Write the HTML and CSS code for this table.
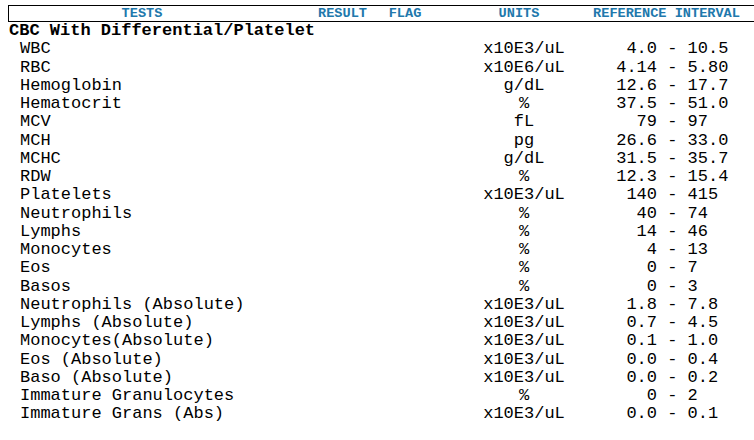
FILE: index.html
```html
<!DOCTYPE html>
<html lang="en">
<head>
<meta charset="utf-8">
<title>CBC With Differential/Platelet</title>
<link rel="stylesheet" href="styles.css">
</head>
<body>
<div class="report">
  <div class="head">
    <div class="h-tests">TESTS</div>
    <div class="h-result">RESULT</div>
    <div class="h-flag">FLAG</div>
    <div class="h-units">UNITS</div>
    <div class="h-ref">REFERENCE INTERVAL</div>
  </div>
  <div class="panel">CBC With Differential/Platelet</div>
  <div class="rows">
    <div class="row"><span class="name">WBC</span><span class="res"></span><span class="flag"></span><span class="units">x10E3/uL</span><span class="ref"><span class="lo">4.0</span><span class="sep">-</span><span class="hi">10.5</span></span></div>
    <div class="row"><span class="name">RBC</span><span class="res"></span><span class="flag"></span><span class="units">x10E6/uL</span><span class="ref"><span class="lo">4.14</span><span class="sep">-</span><span class="hi">5.80</span></span></div>
    <div class="row"><span class="name">Hemoglobin</span><span class="res"></span><span class="flag"></span><span class="units">g/dL</span><span class="ref"><span class="lo">12.6</span><span class="sep">-</span><span class="hi">17.7</span></span></div>
    <div class="row"><span class="name">Hematocrit</span><span class="res"></span><span class="flag"></span><span class="units">%</span><span class="ref"><span class="lo">37.5</span><span class="sep">-</span><span class="hi">51.0</span></span></div>
    <div class="row"><span class="name">MCV</span><span class="res"></span><span class="flag"></span><span class="units">fL</span><span class="ref"><span class="lo">79</span><span class="sep">-</span><span class="hi">97</span></span></div>
    <div class="row"><span class="name">MCH</span><span class="res"></span><span class="flag"></span><span class="units">pg</span><span class="ref"><span class="lo">26.6</span><span class="sep">-</span><span class="hi">33.0</span></span></div>
    <div class="row"><span class="name">MCHC</span><span class="res"></span><span class="flag"></span><span class="units">g/dL</span><span class="ref"><span class="lo">31.5</span><span class="sep">-</span><span class="hi">35.7</span></span></div>
    <div class="row"><span class="name">RDW</span><span class="res"></span><span class="flag"></span><span class="units">%</span><span class="ref"><span class="lo">12.3</span><span class="sep">-</span><span class="hi">15.4</span></span></div>
    <div class="row"><span class="name">Platelets</span><span class="res"></span><span class="flag"></span><span class="units">x10E3/uL</span><span class="ref"><span class="lo">140</span><span class="sep">-</span><span class="hi">415</span></span></div>
    <div class="row"><span class="name">Neutrophils</span><span class="res"></span><span class="flag"></span><span class="units">%</span><span class="ref"><span class="lo">40</span><span class="sep">-</span><span class="hi">74</span></span></div>
    <div class="row"><span class="name">Lymphs</span><span class="res"></span><span class="flag"></span><span class="units">%</span><span class="ref"><span class="lo">14</span><span class="sep">-</span><span class="hi">46</span></span></div>
    <div class="row"><span class="name">Monocytes</span><span class="res"></span><span class="flag"></span><span class="units">%</span><span class="ref"><span class="lo">4</span><span class="sep">-</span><span class="hi">13</span></span></div>
    <div class="row"><span class="name">Eos</span><span class="res"></span><span class="flag"></span><span class="units">%</span><span class="ref"><span class="lo">0</span><span class="sep">-</span><span class="hi">7</span></span></div>
    <div class="row"><span class="name">Basos</span><span class="res"></span><span class="flag"></span><span class="units">%</span><span class="ref"><span class="lo">0</span><span class="sep">-</span><span class="hi">3</span></span></div>
    <div class="row"><span class="name">Neutrophils (Absolute)</span><span class="res"></span><span class="flag"></span><span class="units">x10E3/uL</span><span class="ref"><span class="lo">1.8</span><span class="sep">-</span><span class="hi">7.8</span></span></div>
    <div class="row"><span class="name">Lymphs (Absolute)</span><span class="res"></span><span class="flag"></span><span class="units">x10E3/uL</span><span class="ref"><span class="lo">0.7</span><span class="sep">-</span><span class="hi">4.5</span></span></div>
    <div class="row"><span class="name">Monocytes(Absolute)</span><span class="res"></span><span class="flag"></span><span class="units">x10E3/uL</span><span class="ref"><span class="lo">0.1</span><span class="sep">-</span><span class="hi">1.0</span></span></div>
    <div class="row"><span class="name">Eos (Absolute)</span><span class="res"></span><span class="flag"></span><span class="units">x10E3/uL</span><span class="ref"><span class="lo">0.0</span><span class="sep">-</span><span class="hi">0.4</span></span></div>
    <div class="row"><span class="name">Baso (Absolute)</span><span class="res"></span><span class="flag"></span><span class="units">x10E3/uL</span><span class="ref"><span class="lo">0.0</span><span class="sep">-</span><span class="hi">0.2</span></span></div>
    <div class="row"><span class="name">Immature Granulocytes</span><span class="res"></span><span class="flag"></span><span class="units">%</span><span class="ref"><span class="lo">0</span><span class="sep">-</span><span class="hi">2</span></span></div>
    <div class="row"><span class="name">Immature Grans (Abs)</span><span class="res"></span><span class="flag"></span><span class="units">x10E3/uL</span><span class="ref"><span class="lo">0.0</span><span class="sep">-</span><span class="hi">0.1</span></span></div>
  </div>
</div>
</body>
</html>
```

FILE: styles.css
```css
html, body {
  background: #ffffff;
}

body {
  margin: 5px 0 0 8px;
  font-family: "Liberation Mono", "Courier New", monospace;
  color: #000000;
}

.head {
  display: grid;
  grid-template-columns: 266px 89px 82px 146px 149px;
  height: 15px;
  line-height: 15px;
  border: 1px solid #000000;
  border-right: none;
  font-size: 13.6px;
  font-weight: bold;
  color: #2178ac;
  white-space: nowrap;
}

.head > div {
  display: flex;
  justify-content: center;
}

.head > .h-result {
  justify-content: flex-start;
  padding-left: 43px;
}

.panel {
  font-size: 17px;
  line-height: 18.25px;
  font-weight: bold;
  padding-left: 1px;
  white-space: nowrap;
}

.row {
  display: grid;
  grid-template-columns: 267px 89px 82px 156px 1fr;
  font-size: 17px;
  line-height: 18.25px;
  white-space: nowrap;
}

.name {
  padding-left: 12px;
}

.units {
  text-align: center;
}

.ref {
  display: grid;
  grid-template-columns: 55px 30.6px auto;
}

.lo {
  text-align: right;
}

.sep {
  text-align: center;
}

.hi {
  text-align: left;
}
```
